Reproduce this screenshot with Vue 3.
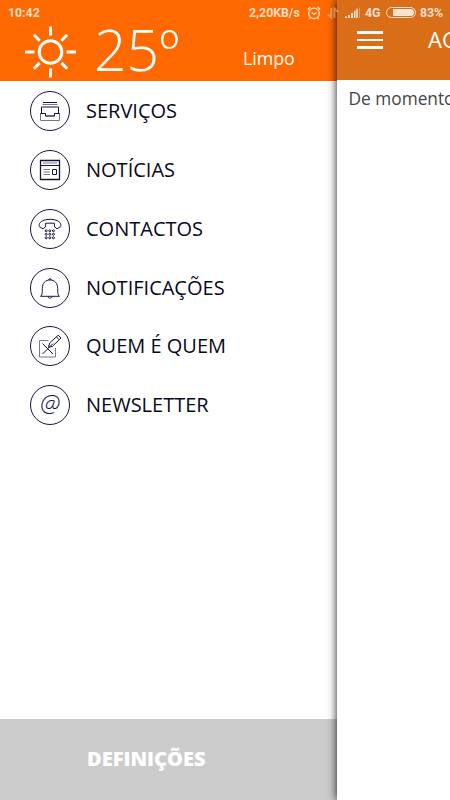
<script setup>
import { ref } from 'vue';

const temperature = ref('25º');
const weather = ref('Limpo');
const selected = ref('');

const menu = [
  { id: 'services', label: 'SERVIÇOS' },
  { id: 'news', label: 'NOTÍCIAS' },
  { id: 'contacts', label: 'CONTACTOS' },
  { id: 'notifications', label: 'NOTIFICAÇÕES' },
  { id: 'who', label: 'QUEM É QUEM' },
  { id: 'newsletter', label: 'NEWSLETTER' },
];

function select(id) {
  selected.value = id;
}
</script>

<template>
  <div class="screen">
    <aside class="drawer">
      <header class="weather">
        <svg class="sun" width="52" height="52" viewBox="0 0 52 52">
          <circle cx="25.5" cy="26" r="11.3" />
          <path d="M25.5 0.5V9.5M25.5 42.5V51.5M0 26H9.5M41.5 26H51M8.8 8.8L14.7 14.7M42.2 8.8L36.3 14.7M8.8 42.8L14.7 36.9M42.2 42.8L36.3 36.9" />
        </svg>
        <span class="temp">{{ temperature }}</span>
        <span class="state">{{ weather }}</span>
      </header>

      <nav class="menu">
        <div v-for="item in menu" :key="item.id" class="item" @click="select(item.id)">
          <svg class="icon" width="40" height="40" viewBox="0 0 40 40">
            <circle cx="20" cy="20" r="19.5" />
            <g v-if="item.id === 'services'">
              <path d="M13 11.5H27" />
              <path class="soft" d="M12.5 13.5H27.5" />
              <path d="M11.5 22V16H28.5V22" />
              <path class="soft" d="M10.5 22.5H15.5V25H24.5V22.5H29.5V29.5H10.5Z" />
              <path d="M10.5 22.5H15.5V25H24.5V22.5H29.5" />
            </g>
            <g v-else-if="item.id === 'news'">
              <path class="frame" d="M10.5 10.5H29.5V29.5H10.5Z" />
              <path d="M10.5 15.5H29.5" />
              <path class="soft" d="M13 13H27M13.5 19.5H20M13.5 22H20M13.5 24.5H20" />
              <path d="M22.5 19.5H26.5V24.5H22.5Z" />
            </g>
            <g v-else-if="item.id === 'contacts'">
              <path d="M9.3 17.6C8.5 14.2 11 12.2 14 11.2C18 10 22 10 26 11.2C29 12.2 31.5 14.2 30.7 17.6L27 19.8L24.4 17.8V14.2H15.6V17.8L13 19.8Z" />
              <g class="keys">
                <circle v-for="n in 9" :key="n" :cx="16.2 + ((n - 1) % 3) * 3.6" :cy="21.8 + Math.floor((n - 1) / 3) * 3.5" r="1" />
              </g>
            </g>
            <g v-else-if="item.id === 'notifications'">
              <path d="M10.5 28.3C12.5 27 12.2 25 12.3 20.5C12.5 15 15.2 12 20 12C24.8 12 27.5 15 27.7 20.5C27.8 25 27.5 27 29.5 28.3ZM18.7 12C18.7 10.2 21.3 10.2 21.3 12M18 28.5C18 30.7 22 30.7 22 28.5" />
            </g>
            <g v-else-if="item.id === 'who'">
              <path class="soft" d="M18.5 14.5H9.5V31H25.5V22" />
              <path d="M12.5 17.5L23 28M23 17.5L12.5 28" />
              <path d="M18.5 21.3L19.6 17L28.2 9.2L31 12L22.5 20.3ZM26.4 10.9L29.2 13.7" />
            </g>
            <text v-else x="20.2" y="27" text-anchor="middle">@</text>
          </svg>
          <span class="label">{{ item.label }}</span>
        </div>
      </nav>

      <footer class="settings">DEFINIÇÕES</footer>
    </aside>

    <main class="page">
      <header class="topbar">
        <div class="burger"><i></i><i></i><i></i></div>
        <span class="title">AGENDA</span>
      </header>
      <p class="empty">De momento não existem eventos</p>
    </main>

    <div class="statusbar">
      <span class="time">10:42</span>
      <span class="speed">2,20KB/s</span>
      <svg class="alarm" width="14" height="14" viewBox="0 0 14 14">
        <circle cx="7" cy="7.4" r="5.3" />
        <path d="M0.8 3.5L3.4 1.1M13.2 3.5L10.6 1.1M4.7 6.6L7 8.5L9.5 6.5M3.2 11.8L2.3 13M10.8 11.8L11.7 13" />
      </svg>
      <svg class="arrows" width="12" height="12" viewBox="0 0 12 12">
        <path d="M4.2 1V10.5L0.8 7.2M7.4 11V1.5L10.8 4.8" />
      </svg>
      <svg class="signal" width="15" height="11" viewBox="0 0 15 11">
        <path d="M0 9.5H2V11H0ZM3 8H5V11H3ZM6 6H8V11H6ZM9 3.7H10.5V11H9ZM11.2 1.8H12.8V11H11.2Z" />
        <path class="off" d="M14 0.5H15V11H14Z" />
      </svg>
      <span class="net">4G</span>
      <span class="battery"><i></i></span>
      <span class="percent">83%</span>
    </div>
  </div>
</template>

<style>
body {
  margin: 0;
  overflow: hidden;
}
</style>

<style scoped>
.screen {
  position: relative;
  display: flex;
  width: 450px;
  height: 800px;
  overflow: hidden;
  background: #fff;
  font-family: "Open Sans", sans-serif;
}
.drawer {
  display: flex;
  flex-direction: column;
  flex: none;
  width: 337px;
}
.weather {
  display: flex;
  box-sizing: border-box;
  height: 81px;
  padding-left: 25px;
  background: #ff6900;
  color: #fff;
}
.sun {
  flex: none;
  margin-top: 26px;
  fill: none;
  stroke: #fff;
  stroke-width: 3;
}
.temp {
  width: 149px;
  margin-left: 17px;
  margin-top: 10px;
  font-size: 57px;
  font-weight: 300;
  line-height: 78px;
}
.state {
  margin-top: 46px;
  font-size: 17.8px;
  line-height: 25px;
}
.menu {
  flex: 1;
  padding-top: 1px;
}
.item {
  display: flex;
  align-items: center;
  height: 58.75px;
  padding-left: 30px;
  color: #08081c;
  cursor: pointer;
}
.icon {
  flex: none;
  fill: none;
  stroke: #15153c;
  stroke-width: 1;
}
.icon .soft {
  stroke: #77778c;
}
.icon .frame {
  stroke-width: 1.3;
}
.icon .keys {
  stroke-width: 1;
}
.icon text {
  fill: #15153c;
  stroke: none;
  font-size: 24px;
  font-style: italic;
  font-weight: 300;
}
.label {
  margin-left: 16px;
  padding-bottom: 1px;
  font-size: 20px;
}
.settings {
  height: 81px;
  box-sizing: border-box;
  padding-left: 87px;
  background: #ccc;
  color: #fff;
  font-size: 20px;
  font-weight: 800;
  line-height: 80px;
}
.page {
  flex: 1;
  min-width: 0;
  overflow: hidden;
  background: #fff;
  box-shadow: 0 0 9px rgba(0, 0, 0, 0.9);
}
.topbar {
  display: flex;
  height: 80px;
  background: #da6e18;
  color: #fff;
}
.burger {
  display: flex;
  flex: none;
  flex-direction: column;
  gap: 5px;
  width: 26px;
  margin: 31px 0 0 20px;
}
.burger i {
  height: 2.7px;
  background: #fff;
}
.title {
  margin-left: 45px;
  padding-top: 23px;
  font-size: 22px;
  line-height: 32px;
}
.empty {
  margin: 7px 0 0 11.5px;
  color: #444;
  font-size: 17.3px;
  line-height: 24px;
  white-space: nowrap;
}
.statusbar {
  position: absolute;
  top: 0;
  left: 0;
  display: flex;
  align-items: center;
  box-sizing: border-box;
  width: 450px;
  height: 25px;
  padding-left: 8px;
  color: rgba(255, 255, 255, 0.8);
  font-family: Roboto, sans-serif;
  font-size: 12.3px;
  font-weight: 700;
}
.statusbar svg {
  flex: none;
}
.time {
  width: 241px;
}
.speed {
  width: 58px;
}
.alarm,
.arrows {
  fill: none;
  stroke: rgba(255, 255, 255, 0.8);
  stroke-width: 1.3;
}
.arrows {
  margin-left: 6px;
  stroke: rgba(255, 255, 255, 0.35);
  stroke-width: 1.8;
}
.signal {
  margin-left: 6px;
  fill: rgba(255, 255, 255, 0.8);
}
.signal .off {
  fill: rgba(255, 255, 255, 0.3);
}
.net {
  width: 21px;
  margin-left: 5px;
}
.battery {
  display: flex;
  justify-content: flex-end;
  box-sizing: border-box;
  width: 30px;
  height: 11px;
  padding: 1px;
  border: 1px solid rgba(255, 255, 255, 0.8);
  border-radius: 6px;
}
.battery i {
  width: 21px;
  border-radius: 0 4px 4px 0;
  background: rgba(255, 255, 255, 0.8);
}
.percent {
  margin-left: 4px;
}
</style>
